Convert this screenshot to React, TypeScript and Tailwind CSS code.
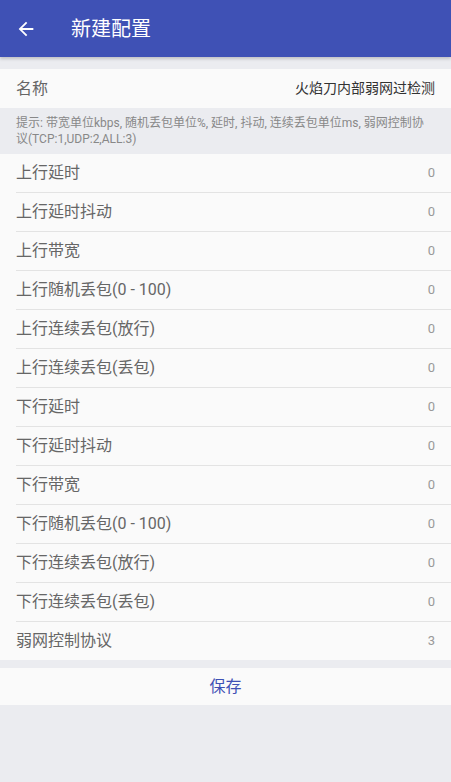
import React from 'react';

const rows: { label: string; value: string }[] = [
  { label: '上行延时', value: '0' },
  { label: '上行延时抖动', value: '0' },
  { label: '上行带宽', value: '0' },
  { label: '上行随机丢包(0 - 100)', value: '0' },
  { label: '上行连续丢包(放行)', value: '0' },
  { label: '上行连续丢包(丢包)', value: '0' },
  { label: '下行延时', value: '0' },
  { label: '下行延时抖动', value: '0' },
  { label: '下行带宽', value: '0' },
  { label: '下行随机丢包(0 - 100)', value: '0' },
  { label: '下行连续丢包(放行)', value: '0' },
  { label: '下行连续丢包(丢包)', value: '0' },
  { label: '弱网控制协议', value: '3' },
];

const font = { fontFamily: 'Roboto, "Noto Sans CJK SC", sans-serif' };

export default function App() {
  return (
    <div className="min-h-[782px] w-[451px] bg-[#ebecf0]" style={font}>
      {/* toolbar */}
      <div className="relative z-10 flex h-[57px] items-center bg-[#3f51b5] shadow-[0_2px_3px_rgba(0,0,0,0.18)]">
        <svg className="ml-[15px] h-[22px] w-[22px]" viewBox="0 0 24 24" fill="white">
          <path d="M20 11H7.83l5.59-5.59L12 4l-8 8 8 8 1.41-1.41L7.83 13H20v-2z" />
        </svg>
        <span className="ml-[34px] text-[20px] text-white">新建配置</span>
      </div>

      <div className="h-[12px]" />

      {/* name */}
      <div className="flex h-[39px] items-center justify-between bg-[#fafafa] px-[16px]">
        <span className="text-[16px] text-[#666]">名称</span>
        <span className="text-[14px] text-[#333]">火焰刀内部弱网过检测</span>
      </div>

      {/* hint */}
      <div className="flex h-[46px] items-center px-[16px] text-[12px] leading-[16px] text-[#888]">
        提示: 带宽单位kbps, 随机丢包单位%, 延时, 抖动, 连续丢包单位ms, 弱网控制协议(TCP:1,UDP:2,ALL:3)
      </div>

      {/* rows */}
      <div className="bg-[#fafafa]">
        {rows.map((r, i) => (
          <div key={r.label} className="pl-[16px]">
            <div
              className={
                i < rows.length - 1
                  ? 'flex h-[39px] items-center justify-between border-b border-[#e3e3e3] pr-[16px]'
                  : 'flex h-[38px] items-center justify-between pr-[16px]'
              }
            >
              <span className="text-[16px] text-[#666]">{r.label}</span>
              <span className="text-[13px] text-[#999]">{r.value}</span>
            </div>
          </div>
        ))}
      </div>

      <div className="h-[8px]" />

      <div className="flex h-[37px] items-center justify-center bg-[#fafafa]">
        <span className="text-[16px] text-[#3f51b5]">保存</span>
      </div>
    </div>
  );
}
